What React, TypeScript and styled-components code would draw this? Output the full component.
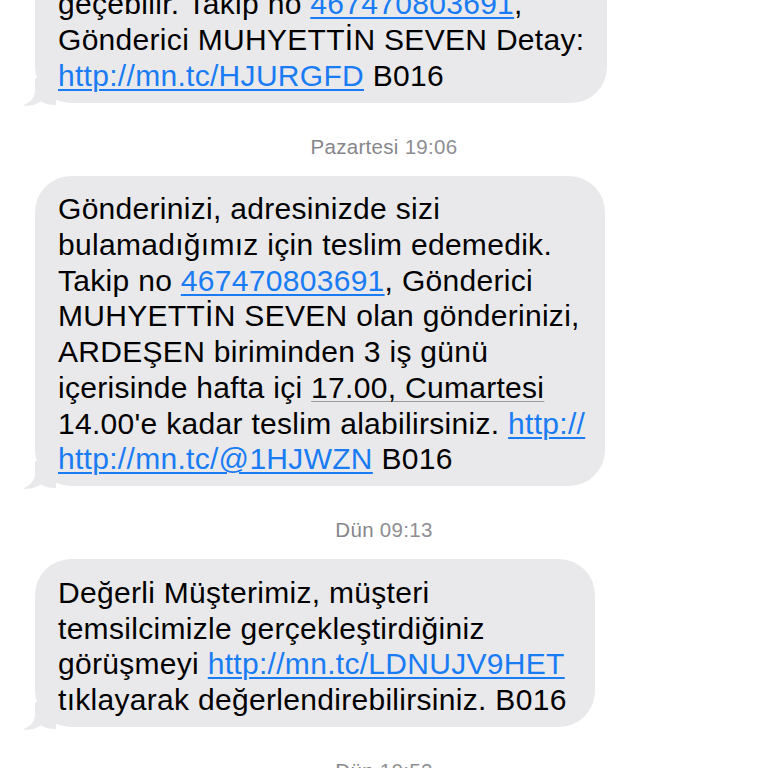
import React from 'react';
import styled, { createGlobalStyle } from 'styled-components';

const GlobalStyle = createGlobalStyle`
    html, body {
        margin: 0;
        padding: 0;
        background: #ffffff;
    }
    body {
        font-family: "Liberation Sans", Arial, sans-serif;
        -webkit-font-smoothing: antialiased;
    }
`;

const Thread = styled.div`
    width: 768px;
    height: 768px;
    overflow: hidden;
    display: flex;
    flex-direction: column;
    align-items: flex-start;
`;

const Feed = styled.div`
    display: flex;
    flex-direction: column;
    align-items: flex-start;
    width: 100%;
    margin-top: -65px;
`;

const Row = styled.div`
    padding-left: 35px;
`;

const Bubble = styled.div<{ $width: number }>`
    position: relative;
    width: ${(p) => p.$width}px;
    box-sizing: border-box;
    padding: 15.5px 0 9.5px 23px;
    background: #e9e9eb;
    border-radius: 36px;
    color: #000000;
    font-size: 30px;
    letter-spacing: 0.3px;
    line-height: 35.7px;
    white-space: nowrap;
`;

const Tail = styled.svg`
    position: absolute;
    left: -13px;
    bottom: -3px;
    width: 34px;
    height: 28px;
`;

const Link = styled.span`
    color: #1a7cf4;
    text-decoration: underline;
    text-decoration-thickness: 1.5px;
    text-underline-offset: 3px;
`;

const Detected = styled.span`
    text-decoration: underline;
    text-decoration-color: #9a9a9a;
    text-decoration-thickness: 1px;
    text-underline-offset: 3px;
`;

const Stamp = styled.div`
    align-self: stretch;
    text-align: center;
    margin: 33px 0 18px;
    font-size: 20.5px;
    letter-spacing: 0.3px;
    line-height: 22px;
    color: #8e8e93;
`;

const Day = styled.span`
    color: #86868b;
`;

const BubbleTail = () => (
    <Tail viewBox="0 0 34 28">
        <path
            d="M13 0 L13 12 C13 19 9 24 1 27.5 C7 28.2 14 27 19 23.5 C23 26 28 27 34 27 L34 0 Z"
            fill="#e9e9eb"
        />
    </Tail>
);

const Message: React.FC<{ width: number; children: React.ReactNode }> = ({ width, children }) => (
    <Row>
        <Bubble $width={width}>
            {children}
            <BubbleTail />
        </Bubble>
    </Row>
);

const TimeStamp: React.FC<{ day: string; time: string }> = ({ day, time }) => (
    <Stamp>
        <Day>{day}</Day> {time}
    </Stamp>
);

const App: React.FC = () => {
    return (
        <>
            <GlobalStyle />
            <Thread>
                <Feed>
                    <Message width={572}>
                        Gönderiniz teslim edilemediği için iadeye
                        <br />
                        geçebilir. Takip no <Link>467470803691</Link>,
                        <br />
                        Gönderici MUHYETTİN SEVEN Detay:
                        <br />
                        <Link>http://mn.tc/HJURGFD</Link> B016
                    </Message>

                    <TimeStamp day="Pazartesi" time="19:06" />

                    <Message width={570}>
                        Gönderinizi, adresinizde sizi
                        <br />
                        bulamadığımız için teslim edemedik.
                        <br />
                        Takip no <Link>467470803691</Link>, Gönderici
                        <br />
                        MUHYETTİN SEVEN olan gönderinizi,
                        <br />
                        ARDEŞEN biriminden 3 iş günü
                        <br />
                        içerisinde hafta içi <Detected>17.00, Cumartesi</Detected>
                        <br />
                        14.00'e kadar teslim alabilirsiniz. <Link>http://</Link>
                        <br />
                        <Link>http://mn.tc/@1HJWZN</Link> B016
                    </Message>

                    <TimeStamp day="Dün" time="09:13" />

                    <Message width={560}>
                        Değerli Müşterimiz, müşteri
                        <br />
                        temsilcimizle gerçekleştirdiğiniz
                        <br />
                        görüşmeyi <Link>http://mn.tc/LDNUJV9HET</Link>
                        <br />
                        tıklayarak değerlendirebilirsiniz. B016
                    </Message>

                    <TimeStamp day="Dün" time="10:52" />
                </Feed>
            </Thread>
        </>
    );
};

export default App;
